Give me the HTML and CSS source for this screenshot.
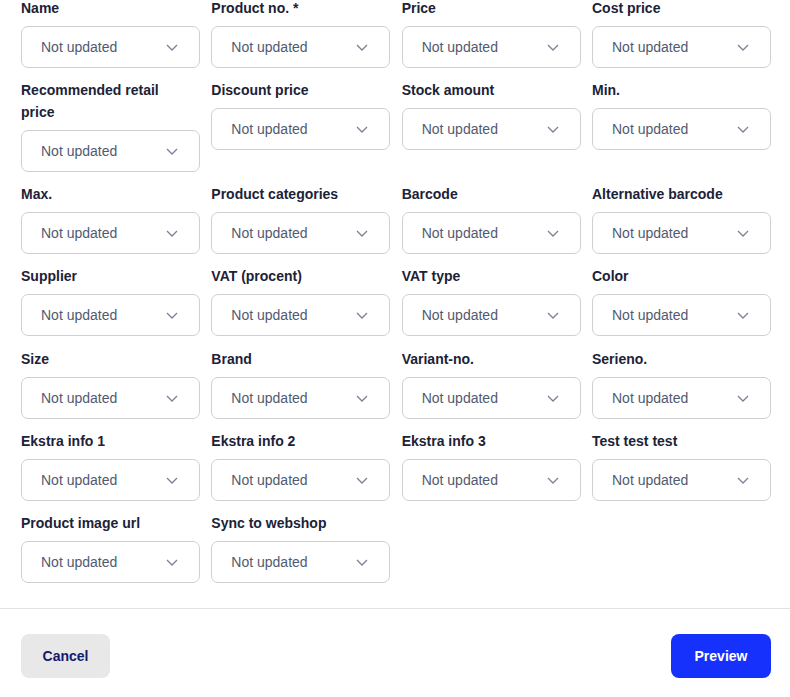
FILE: index.html
```html
<!DOCTYPE html>
<html>
<head>
<meta charset="utf-8">
<link rel="stylesheet" href="styles.css">
</head>
<body>
<div class="grid">
  <div class="field"><div class="label">Name</div><div class="select"><span>Not updated</span><svg class="chev" viewBox="0 0 12 7"><path d="M1 1l5 5 5-5"/></svg></div></div>
  <div class="field"><div class="label">Product no. *</div><div class="select"><span>Not updated</span><svg class="chev" viewBox="0 0 12 7"><path d="M1 1l5 5 5-5"/></svg></div></div>
  <div class="field"><div class="label">Price</div><div class="select"><span>Not updated</span><svg class="chev" viewBox="0 0 12 7"><path d="M1 1l5 5 5-5"/></svg></div></div>
  <div class="field"><div class="label">Cost price</div><div class="select"><span>Not updated</span><svg class="chev" viewBox="0 0 12 7"><path d="M1 1l5 5 5-5"/></svg></div></div>

  <div class="field"><div class="label">Recommended retail price</div><div class="select"><span>Not updated</span><svg class="chev" viewBox="0 0 12 7"><path d="M1 1l5 5 5-5"/></svg></div></div>
  <div class="field"><div class="label">Discount price</div><div class="select"><span>Not updated</span><svg class="chev" viewBox="0 0 12 7"><path d="M1 1l5 5 5-5"/></svg></div></div>
  <div class="field"><div class="label">Stock amount</div><div class="select"><span>Not updated</span><svg class="chev" viewBox="0 0 12 7"><path d="M1 1l5 5 5-5"/></svg></div></div>
  <div class="field"><div class="label">Min.</div><div class="select"><span>Not updated</span><svg class="chev" viewBox="0 0 12 7"><path d="M1 1l5 5 5-5"/></svg></div></div>

  <div class="field"><div class="label">Max.</div><div class="select"><span>Not updated</span><svg class="chev" viewBox="0 0 12 7"><path d="M1 1l5 5 5-5"/></svg></div></div>
  <div class="field"><div class="label">Product categories</div><div class="select"><span>Not updated</span><svg class="chev" viewBox="0 0 12 7"><path d="M1 1l5 5 5-5"/></svg></div></div>
  <div class="field"><div class="label">Barcode</div><div class="select"><span>Not updated</span><svg class="chev" viewBox="0 0 12 7"><path d="M1 1l5 5 5-5"/></svg></div></div>
  <div class="field"><div class="label">Alternative barcode</div><div class="select"><span>Not updated</span><svg class="chev" viewBox="0 0 12 7"><path d="M1 1l5 5 5-5"/></svg></div></div>

  <div class="field"><div class="label">Supplier</div><div class="select"><span>Not updated</span><svg class="chev" viewBox="0 0 12 7"><path d="M1 1l5 5 5-5"/></svg></div></div>
  <div class="field"><div class="label">VAT (procent)</div><div class="select"><span>Not updated</span><svg class="chev" viewBox="0 0 12 7"><path d="M1 1l5 5 5-5"/></svg></div></div>
  <div class="field"><div class="label">VAT type</div><div class="select"><span>Not updated</span><svg class="chev" viewBox="0 0 12 7"><path d="M1 1l5 5 5-5"/></svg></div></div>
  <div class="field"><div class="label">Color</div><div class="select"><span>Not updated</span><svg class="chev" viewBox="0 0 12 7"><path d="M1 1l5 5 5-5"/></svg></div></div>

  <div class="field"><div class="label">Size</div><div class="select"><span>Not updated</span><svg class="chev" viewBox="0 0 12 7"><path d="M1 1l5 5 5-5"/></svg></div></div>
  <div class="field"><div class="label">Brand</div><div class="select"><span>Not updated</span><svg class="chev" viewBox="0 0 12 7"><path d="M1 1l5 5 5-5"/></svg></div></div>
  <div class="field"><div class="label">Variant-no.</div><div class="select"><span>Not updated</span><svg class="chev" viewBox="0 0 12 7"><path d="M1 1l5 5 5-5"/></svg></div></div>
  <div class="field"><div class="label">Serieno.</div><div class="select"><span>Not updated</span><svg class="chev" viewBox="0 0 12 7"><path d="M1 1l5 5 5-5"/></svg></div></div>

  <div class="field"><div class="label">Ekstra info 1</div><div class="select"><span>Not updated</span><svg class="chev" viewBox="0 0 12 7"><path d="M1 1l5 5 5-5"/></svg></div></div>
  <div class="field"><div class="label">Ekstra info 2</div><div class="select"><span>Not updated</span><svg class="chev" viewBox="0 0 12 7"><path d="M1 1l5 5 5-5"/></svg></div></div>
  <div class="field"><div class="label">Ekstra info 3</div><div class="select"><span>Not updated</span><svg class="chev" viewBox="0 0 12 7"><path d="M1 1l5 5 5-5"/></svg></div></div>
  <div class="field"><div class="label">Test test test</div><div class="select"><span>Not updated</span><svg class="chev" viewBox="0 0 12 7"><path d="M1 1l5 5 5-5"/></svg></div></div>

  <div class="field"><div class="label">Product image url</div><div class="select"><span>Not updated</span><svg class="chev" viewBox="0 0 12 7"><path d="M1 1l5 5 5-5"/></svg></div></div>
  <div class="field"><div class="label">Sync to webshop</div><div class="select"><span>Not updated</span><svg class="chev" viewBox="0 0 12 7"><path d="M1 1l5 5 5-5"/></svg></div></div>
</div>
<div class="footer">
  <button class="btn cancel">Cancel</button>
  <button class="btn preview">Preview</button>
</div>
</body>
</html>
```
FILE: styles.css
```css
html, body {
  margin: 0;
  padding: 0;
  background: #fff;
  font-family: "Liberation Sans", Arial, sans-serif;
}
.grid {
  display: grid;
  grid-template-columns: repeat(4, 179px);
  column-gap: 11.33px;
  row-gap: 11.15px;
  margin-top: -3px;
  padding: 0 21px;
  padding-bottom: 25px;
  border-bottom: 1px solid #e2e2e2;
}
.field {
  display: flex;
  flex-direction: column;
}
.label {
  font-size: 14px;
  font-weight: bold;
  line-height: 22px;
  color: #1c2237;
  margin-bottom: 7px;
  padding-right: 20px;
}
.select {
  box-sizing: border-box;
  height: 42px;
  border: 1px solid #cfd0d4;
  border-radius: 7px;
  display: flex;
  align-items: center;
  justify-content: space-between;
  padding: 0 21px 0 19px;
  font-size: 14px;
  color: #515a70;
}
.chev {
  width: 12px;
  height: 7px;
  margin-top: 1px;
}
.chev path {
  fill: none;
  stroke: #7a8194;
  stroke-width: 1.3;
}
.footer {
  display: flex;
  justify-content: space-between;
  padding: 25px 19px 0 21px;
}
.btn {
  border: none;
  height: 44px;
  border-radius: 8px;
  font-family: "Liberation Sans", Arial, sans-serif;
  font-size: 14px;
  font-weight: bold;
}
.cancel {
  width: 89px;
  background: #e8e8e8;
  color: #141a6b;
}
.preview {
  width: 100px;
  background: #1631fb;
  color: #fff;
}
```
